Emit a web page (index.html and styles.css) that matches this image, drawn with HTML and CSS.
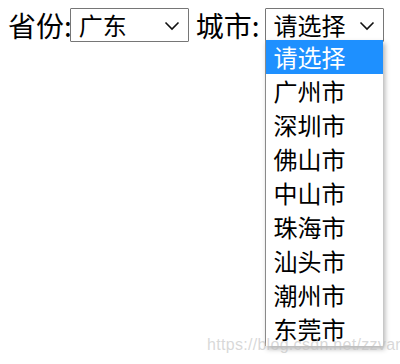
FILE: index.html
```html
<!DOCTYPE html>
<html lang="zh">
<head>
<meta charset="utf-8">
<link rel="stylesheet" href="styles.css">
</head>
<body>
<div class="row">
  <span class="label">省份:</span>
  <div class="select first">
    <span class="value">广东</span>
    <svg class="chev" width="16" height="10" viewBox="0 0 16 10"><path d="M1.5 1.5 L8 8 L14.5 1.5" fill="none" stroke="#111" stroke-width="1.6"/></svg>
  </div>
  <span class="label city">城市:</span>
  <div class="select-wrap">
    <div class="select">
      <span class="value">请选择</span>
      <svg class="chev" width="16" height="10" viewBox="0 0 16 10"><path d="M1.5 1.5 L8 8 L14.5 1.5" fill="none" stroke="#111" stroke-width="1.6"/></svg>
    </div>
    <ul class="menu">
      <li class="active">请选择</li>
      <li>广州市</li>
      <li>深圳市</li>
      <li>佛山市</li>
      <li>中山市</li>
      <li>珠海市</li>
      <li>汕头市</li>
      <li>潮州市</li>
      <li>东莞市</li>
    </ul>
  </div>
</div>
<div class="watermark">https://blog.csdn.net/zzvar</div>
</body>
</html>
```
FILE: styles.css
```css
html, body {
  margin: 0;
  padding: 0;
  background: #fff;
}
body {
  padding: 8px;
  font-family: "Noto Sans CJK SC", "Noto Sans", sans-serif;
  color: #000;
  position: relative;
  height: 364px;
  box-sizing: border-box;
}
.row {
  display: flex;
  align-items: center;
  height: 34px;
}
.label {
  font-size: 28px;
  line-height: 34px;
}
.first {
  margin-left: -2px;
}
.city {
  margin-left: 7px;
}
.select-wrap {
  position: relative;
  margin-left: 5px;
}
.select {
  box-sizing: border-box;
  width: 119px;
  height: 34px;
  border: 1px solid #767676;
  border-radius: 1px;
  background: #fff;
  display: flex;
  align-items: center;
  padding-left: 8px;
  position: relative;
}
.value {
  font-size: 24px;
  line-height: 32px;
}
.chev {
  position: absolute;
  right: 8px;
  top: 12px;
}
.menu {
  position: absolute;
  top: 32px;
  left: 0;
  width: 118px;
  margin: 0;
  padding: 0;
  list-style: none;
  background: #fff;
  border-left: 1px solid #8a8a8a;
  box-sizing: border-box;
  box-shadow: 2px 3px 5px rgba(0,0,0,0.3);
  z-index: 5;
}
.menu li {
  height: 34px;
  line-height: 34px;
  font-size: 24px;
  padding-left: 8px;
}
.menu li.active {
  background: #1e90ff;
  color: #fff;
}
.watermark {
  position: absolute;
  left: 207px;
  top: 336px;
  font-family: "Liberation Sans", Arial, sans-serif;
  font-size: 16px;
  color: rgba(190,190,190,0.6);
  z-index: 10;
  letter-spacing: 0.3px;
}
```
